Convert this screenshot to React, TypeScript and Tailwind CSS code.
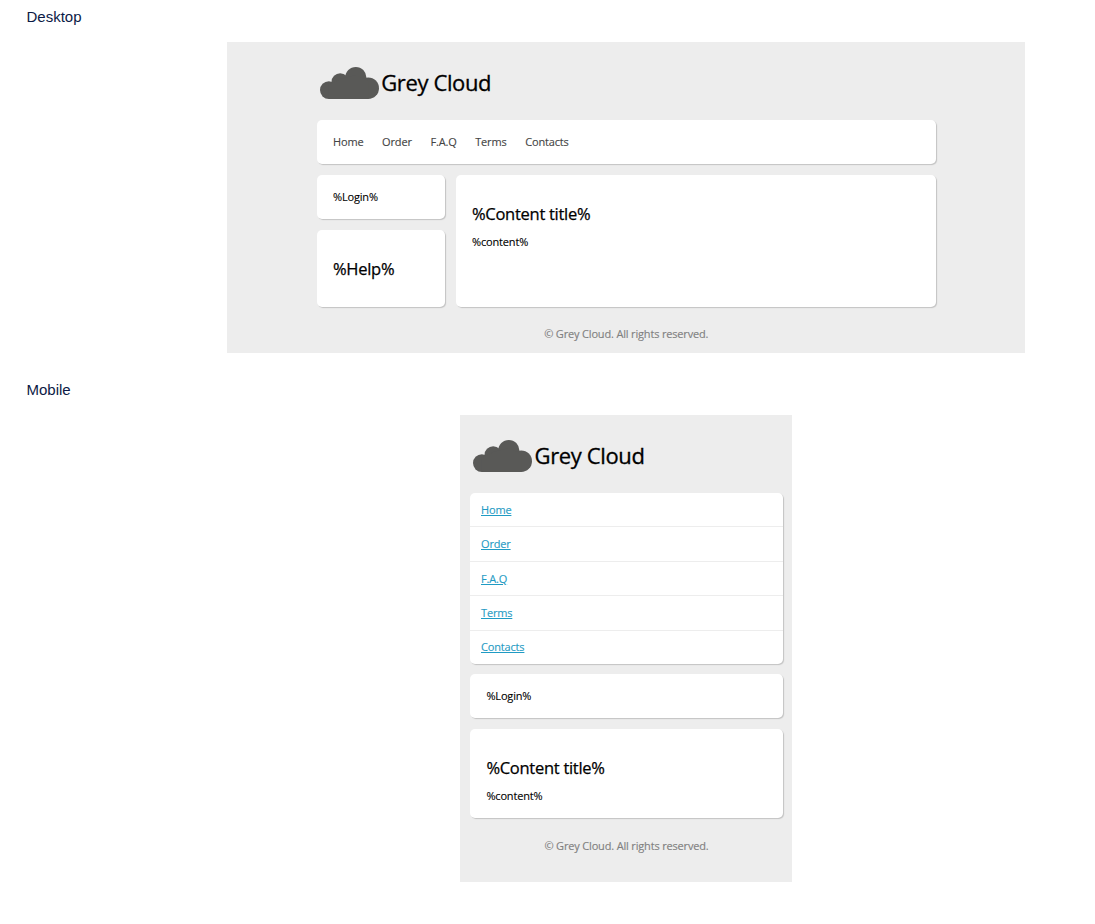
import type { ReactNode } from "react";

const links = ["Home", "Order", "F.A.Q", "Terms", "Contacts"];

function Card({ className = "", children }: { className?: string; children: ReactNode }) {
  return (
    <div className={`rounded-[5px] bg-white shadow-[1px_1px_1px_#c2c2c2] ${className}`}>
      {children}
    </div>
  );
}

function Logo() {
  return (
    <div className="flex h-8 items-center">
      <svg width="59" height="32" viewBox="0 0 59 32" fill="#595957" className="shrink-0">
        <circle cx="8.9" cy="23.1" r="8.9" />
        <circle cx="20.2" cy="15" r="8.7" />
        <circle cx="35.8" cy="10.6" r="10.6" />
        <circle cx="48.2" cy="21.2" r="10.8" />
        <path d="M8.9 32V18L20 12L36 8L48.2 14V32Z" />
      </svg>
      <span className="mb-[3px] ml-[2.5px] text-[22px] leading-8 tracking-[-0.37px] [-webkit-text-stroke:0.3px]">
        Grey Cloud
      </span>
    </div>
  );
}

function Title({ children }: { children: ReactNode }) {
  return (
    <h2 className="text-[16.5px] leading-[22px] tracking-[-0.28px] [-webkit-text-stroke:0.25px]">
      {children}
    </h2>
  );
}

function Label({ children }: { children: ReactNode }) {
  return (
    <h1 className="pl-[26.5px] font-['Liberation_Sans',Arial,sans-serif] text-[15px] leading-5 tracking-normal text-[#0b1a45] [-webkit-text-stroke:0px]">
      {children}
    </h1>
  );
}

function Desktop() {
  return (
    <section className="ml-[226.5px] mt-[15px] h-[311px] w-[798.5px] bg-[#ededed] pl-[90.5px] pt-[25px]">
      <div className="w-[618.5px]">
        <div className="pl-[2.7px]">
          <Logo />
        </div>
        <Card className="mt-[21px] flex h-11 items-center gap-[18.7px] pl-4 text-[#444]">
          {links.map((link) => (
            <a key={link}>{link}</a>
          ))}
        </Card>
        <div className="mt-[11px] flex gap-[11px]">
          <div className="flex w-32 flex-col gap-[11px]">
            <Card className="flex h-11 items-center pl-4">%Login%</Card>
            <Card className="flex h-[76.5px] items-center pl-4 pt-px">
              <Title>%Help%</Title>
            </Card>
          </div>
          <Card className="flex-1 pl-4 pt-7">
            <Title>%Content title%</Title>
            <p className="mt-[9px] leading-4">%content%</p>
          </Card>
        </div>
        <footer className="mt-[19px] text-center leading-4 text-[#808080]">
          © Grey Cloud. All rights reserved.
        </footer>
      </div>
    </section>
  );
}

function Mobile() {
  return (
    <section className="ml-[460px] mt-[15px] h-[467px] w-[332px] bg-[#ededed] pl-2.5 pt-[25px]">
      <div className="w-[313px]">
        <div className="pl-[3px]">
          <Logo />
        </div>
        <Card className="mt-[21px] flex h-[171px] flex-col divide-y divide-[#ededed]">
          {links.map((link) => (
            <div key={link} className="flex flex-1 items-center pl-[11px] text-[#1f9bc4]">
              <a className="underline">{link}</a>
            </div>
          ))}
        </Card>
        <Card className="mt-2.5 flex h-11 items-center pl-[16.4px]">%Login%</Card>
        <Card className="mt-[11px] h-[89px] pl-[16.4px] pt-7">
          <Title>%Content title%</Title>
          <p className="mt-[9px] leading-4">%content%</p>
        </Card>
        <footer className="mt-5 text-center leading-4 text-[#808080]">
          © Grey Cloud. All rights reserved.
        </footer>
      </div>
    </section>
  );
}

export default function App() {
  return (
    <main className="h-[924px] w-[1095px] overflow-hidden whitespace-nowrap bg-white pt-[7px] font-['Open_Sans',sans-serif] text-[11px] leading-4 tracking-[-0.17px] text-black [-webkit-text-stroke:0.12px]">
      <Label>Desktop</Label>
      <Desktop />
      <div className="pt-[27px]">
        <Label>Mobile</Label>
      </div>
      <Mobile />
    </main>
  );
}
